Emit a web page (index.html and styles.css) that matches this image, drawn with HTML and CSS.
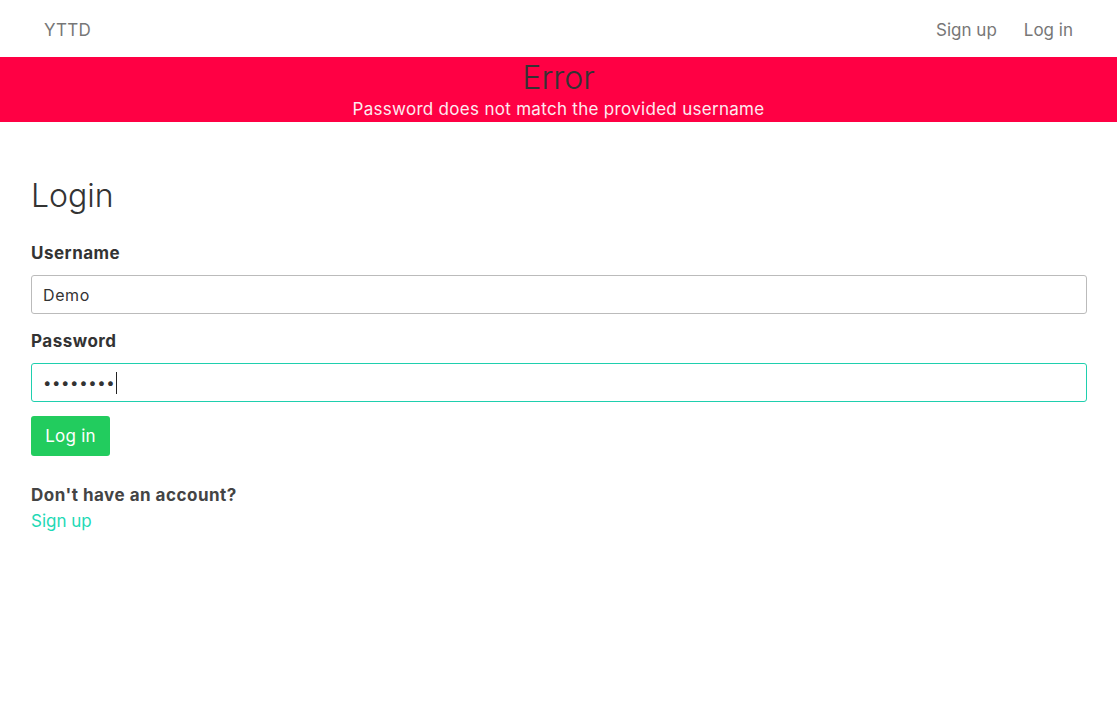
FILE: index.html
```html
<!DOCTYPE html>
<html lang="en">
<head>
<meta charset="utf-8">
<title>YTTD - Login</title>
<link rel="stylesheet" href="styles.css">
</head>
<body>
<nav class="navbar">
  <a class="brand" href="#">YTTD</a>
  <div class="nav-links">
    <a href="#">Sign up</a>
    <a href="#">Log in</a>
  </div>
</nav>
<div class="error-band">
  <div class="error-title">Error</div>
  <div class="error-msg">Password does not match the provided username</div>
</div>
<main class="content">
  <h1 class="title">Login</h1>
  <form class="form">
    <label class="label" for="u">Username</label>
    <input class="input" id="u" type="text" value="Demo">
    <label class="label" for="p">Password</label>
    <div class="input input-focus"><span class="dots">••••••••</span><span class="caret"></span></div>
    <button class="btn" type="button">Log in</button>
  </form>
  <p class="prompt">Don't have an account?</p>
  <a class="link" href="#">Sign up</a>
</main>
</body>
</html>
```
FILE: styles.css
```css
* { box-sizing: border-box; }
body {
  margin: 0;
  font-family: Inter, "Noto Sans", sans-serif;
  color: #333;
  background: #fff;
}
a { text-decoration: none; }
.navbar {
  height: 57px;
  display: flex;
  align-items: center;
  justify-content: space-between;
  padding: 2px 44px 0 44px;
}
.brand {
  color: #777;
  font-size: 17px;
  letter-spacing: 0.2px;
}
.nav-links {
  display: flex;
  gap: 27px;
}
.nav-links a {
  color: #777;
  font-size: 17px;
}
.error-band {
  background: #ff0044;
  height: 65px;
  text-align: center;
  padding-top: 1px;
}
.error-title {
  font-size: 32px;
  font-weight: 300;
  color: #333;
  line-height: 40px;
}
.error-msg {
  color: #fdeaf0;
  font-size: 17px;
  letter-spacing: 0.3px;
  line-height: 22px;
}
.content {
  padding: 0 30px 0 31px;
}
.title {
  font-size: 32px;
  font-weight: 300;
  margin: 54px 0 27px;
  line-height: 40px;
}
.form {
  display: flex;
  flex-direction: column;
  align-items: flex-start;
}
.label {
  font-weight: 700;
  font-size: 17px;
  letter-spacing: 0.5px;
  line-height: 20px;
  margin-bottom: 12px;
  color: #333;
}
.input {
  width: 100%;
  height: 39px;
  border: 1px solid #bbb;
  border-radius: 3px;
  padding: 0 11px;
  font-family: inherit;
  font-size: 16px;
  letter-spacing: 0.6px;
  color: #333;
  margin-bottom: 17px;
  outline: none;
}
.input-focus {
  border-color: #1fcfae;
  display: flex;
  align-items: center;
  margin-bottom: 14px;
}
.dots {
  letter-spacing: 0.6px;
  font-size: 15px;
}
.caret {
  display: inline-block;
  width: 1px;
  height: 22px;
  background: #222;
  margin-left: 1px;
}
.btn {
  background: #22cc5e;
  color: #fff;
  border: none;
  border-radius: 3px;
  height: 40px;
  width: 79px;
  padding: 0;
  font-family: inherit;
  font-size: 17px;
  letter-spacing: 0.2px;
}
.prompt {
  font-weight: 700;
  font-size: 17px;
  letter-spacing: 0.5px;
  margin: 29px 0 6px;
  color: #444;
  line-height: 20px;
}
.link {
  color: #1ed9b5;
  font-size: 17px;
}
```
